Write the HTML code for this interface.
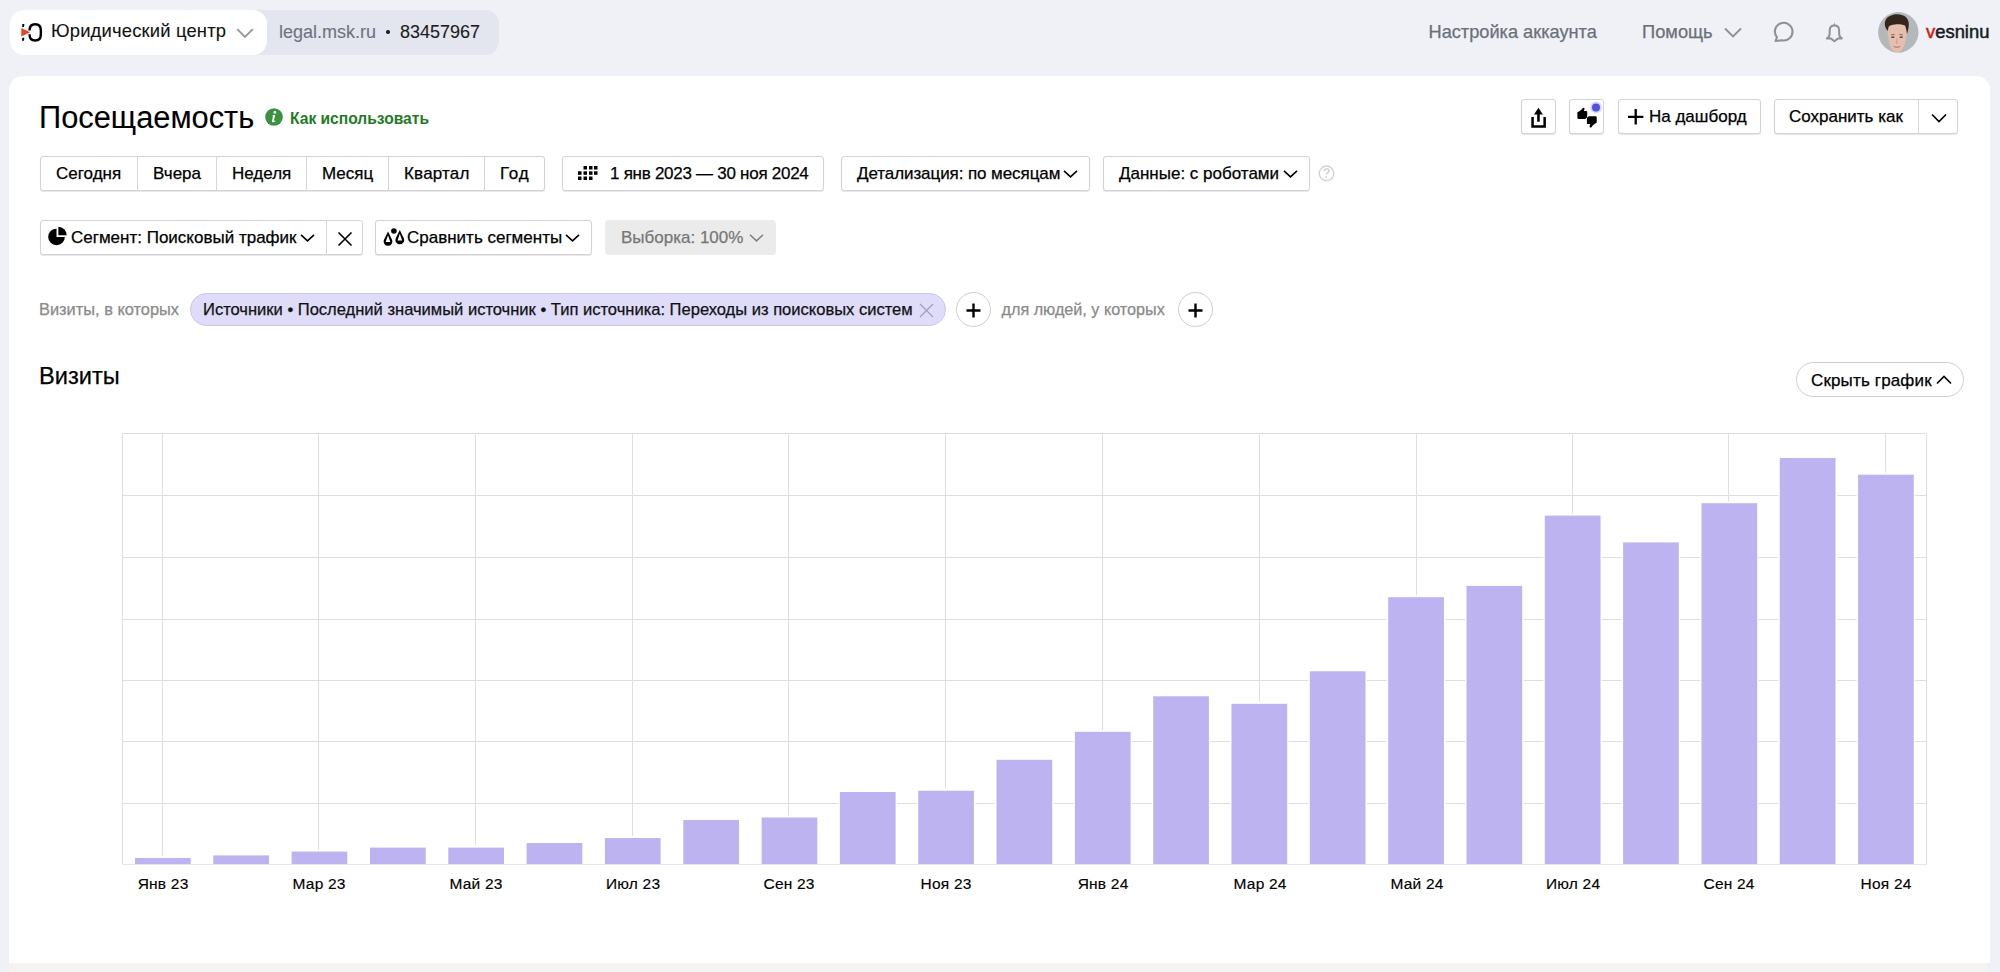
<!DOCTYPE html>
<html lang="ru">
<head>
<meta charset="utf-8">
<title>Посещаемость</title>
<style>
*{box-sizing:border-box;margin:0;padding:0}
html,body{width:2000px;height:972px;overflow:hidden}
body{position:relative;background:#eff1f6;font-family:"Liberation Sans",sans-serif;color:#000}
.a{position:absolute}
.t{position:absolute;white-space:nowrap;line-height:1;-webkit-text-stroke:0.25px currentColor}
.btn{position:absolute;background:#fff;border:1px solid #d3d3d3;border-radius:3px;box-shadow:0 1px 1px rgba(0,0,0,.10)}
.div{position:absolute;width:1px;background:#d6d6d6}
svg{position:absolute;overflow:visible}
</style>
</head>
<body>
<!-- ===== top header ===== -->
<div class="a" style="left:10px;top:10px;width:489px;height:45px;border-radius:14px;background:#e3e6ee"></div>
<div class="a" style="left:10px;top:10px;width:257px;height:45px;border-radius:14px;background:#fff"></div>
<svg style="left:20px;top:22px" width="24" height="21" viewBox="0 0 24 21">
  <path d="M2.3 2.0 L4.4 2.0 L4.0 5.0 L2.1 5.0 Z" fill="#000"/>
  <path d="M2.3 15.8 L4.3 15.8 L4.0 18.8 L2.1 18.8 Z" fill="#000"/>
  <path d="M1.3 5.9 L10.2 10.2 L1.3 14.5 Z" fill="#e0482a"/>
  <path d="M9.55 8.4 L9.55 8.2 C9.55 4.5 11.5 2.2 15.2 2.2 C18.9 2.2 20.85 4.5 20.85 8.2 L20.85 12.5 C20.85 16.2 18.9 18.5 15.2 18.5 C11.5 18.5 9.55 16.2 9.55 12.5 L9.55 12.2" fill="none" stroke="#000" stroke-width="2.4"/>
</svg>
<div class="t" style="left:51px;top:22px;font-size:18.4px;letter-spacing:0.18px;color:#111;-webkit-text-stroke:0.1px #111">Юридический центр</div>
<svg style="left:236px;top:28px" width="18" height="11" viewBox="0 0 18 11"><path d="M1.2 1.2 L9 9 L16.8 1.2" fill="none" stroke="#92959d" stroke-width="1.8"/></svg>
<div class="t" style="left:279px;top:23px;font-size:18px;color:#6e7280;-webkit-text-stroke:0.1px #6e7280">legal.msk.ru</div>
<div class="a" style="left:386.3px;top:30.3px;width:3.4px;height:3.4px;border-radius:50%;background:#222"></div>
<div class="t" style="left:400px;top:23px;font-size:18px;color:#1b1b1f;-webkit-text-stroke:0.1px #1b1b1f">83457967</div>

<div class="t" style="left:1428.5px;top:23px;font-size:18.2px;color:#6b6f79">Настройка аккаунта</div>
<div class="t" style="left:1642px;top:23px;font-size:18.3px;color:#6b6f79">Помощь</div>
<svg style="left:1724px;top:27px" width="18" height="11" viewBox="0 0 18 11"><path d="M1 1.5 L9 9.5 L17 1.5" fill="none" stroke="#8c909a" stroke-width="1.8"/></svg>
<svg style="left:1768px;top:17px" width="30" height="30" viewBox="0 0 30 30"><path d="M8.96 20.26 A8.8 8.8 0 1 1 13.87 23.21 L7.6 24.0 Z" fill="none" stroke="#8d9199" stroke-width="2.1" stroke-linejoin="round"/></svg>
<svg style="left:1820px;top:17px" width="30" height="30" viewBox="0 0 30 30"><path d="M6.9 21.4 C8.7 20.6 9.5 19.5 9.6 17 L9.7 13.2 C9.7 10.2 11.7 8.6 14.4 8.6 C17.1 8.6 19.1 10.2 19.1 13.2 L19.2 17 C19.3 19.5 20.1 20.6 21.9 21.4 L18.1 21.4 L14.4 24.3 L10.7 21.4 Z" fill="none" stroke="#8d9199" stroke-width="2" stroke-linejoin="round"/><path d="M13.3 8.9 L14.4 5.4 L15.5 8.9 Z" fill="#8d9199"/></svg>
<svg style="left:1878px;top:12px" width="41" height="41" viewBox="0 0 41 41"><defs><clipPath id="avc"><circle cx="20.3" cy="20.3" r="20.2"/></clipPath><filter id="avb" x="-10%" y="-10%" width="120%" height="120%"><feGaussianBlur stdDeviation="0.55"/></filter></defs>
<g clip-path="url(#avc)"><rect width="41" height="41" fill="#b4b8bb"/>
<g filter="url(#avb)">
<path d="M9.5 16 C9.5 11 13 8.5 19 8.5 C25 8.5 28.8 11 28.8 17 C28.8 24 27.5 31 25 36 C23.5 39 21.5 40 19 40 C16.5 40 14.5 39 13 36 C10.8 31 9.5 23 9.5 16 Z" fill="#e4bfae"/>
<path d="M13 36 C14 42 24 42 25 36 L26 42 L12 42 Z" fill="#d9ab98"/>
<path d="M6.8 12.5 C6.5 8 9.5 4 14 3.2 C16.5 2 21 2 24.5 3.2 C28.5 4.5 31 8 30.8 12.5 C30.7 16 30 19 29 22 C28.5 18.5 28 15.5 27 13.5 C24 12.5 20 12 17 12.5 C14 12.8 12 13.5 10.8 14.5 C10.2 16 10 17.5 10 19 C8 17 7 15 6.8 12.5 Z" fill="#34271f"/>
<ellipse cx="14.8" cy="25.2" rx="1.7" ry="0.9" fill="#6b4a3f"/><ellipse cx="23.2" cy="25.2" rx="1.7" ry="0.9" fill="#6b4a3f"/>
<path d="M13 22.8 L16.8 22.5 M21.2 22.5 L25 22.8" stroke="#8a6455" stroke-width="0.9"/>
<path d="M19 26.5 L18.3 31 L20 31.4" stroke="#c9998a" stroke-width="0.9" fill="none"/>
<path d="M15.8 34.6 C17.5 35.3 20.5 35.3 22.2 34.6" stroke="#a87565" stroke-width="1.1" fill="none"/>
</g></g></svg>
<div class="t" style="left:1926px;top:22.5px;font-size:18.4px;font-weight:400;color:#1a1a1f;-webkit-text-stroke:0.5px #1a1a1f"><span style="color:#d0160e;-webkit-text-stroke:0.5px #d0160e">v</span>esninu</div>

<!-- ===== main card ===== -->
<div class="a" style="left:9px;top:76px;width:1980.5px;height:886.5px;background:#fff;border-radius:14px 14px 0 0"></div>
<div class="a" style="left:9px;top:962.5px;width:1979px;height:10px;background:#f4f3f1"></div>

<!-- title -->
<div class="t" style="left:39px;top:103px;font-size:30.8px;color:#000;-webkit-text-stroke:0.1px #000">Посещаемость</div>
<svg style="left:265px;top:107.6px" width="18" height="18" viewBox="0 0 18 18"><circle cx="9" cy="9" r="8.8" fill="#3a9140"/><circle cx="9.9" cy="4.4" r="1.35" fill="#fff"/><path d="M7.6 7.3 L10.2 7.0 L8.9 12.6 C8.8 13.1 9.2 13.2 10.3 12.6 L10.5 13.3 C9.4 14.1 8.6 14.4 7.8 14.3 C7.0 14.2 6.9 13.6 7.0 13.0 L8.0 8.3 L7.4 8.2 Z" fill="#fff"/></svg>
<div class="t" style="left:290px;top:110.6px;font-size:15.6px;font-weight:700;color:#237a25;-webkit-text-stroke:0">Как использовать</div>

<!-- right action buttons -->
<div class="btn" style="left:1521px;top:99px;width:35px;height:35px"></div>
<svg style="left:1522px;top:100px" width="34" height="34" viewBox="0 0 34 34"><path d="M10.55 17.1 V26.5 H22.65 V17.1" fill="none" stroke="#000" stroke-width="2.5"/><path d="M16.45 13.5 V21.7" stroke="#000" stroke-width="2.6"/><path d="M16.45 7.8 L12.0 14.4 L20.9 14.4 Z" fill="#000"/></svg>
<div class="btn" style="left:1569px;top:99px;width:35px;height:35px"></div>
<svg style="left:1570px;top:100px" width="34" height="34" viewBox="0 0 34 34"><defs><path id="thu" d="M7.4 12.3 C9.5 11.6 11.5 9.7 12.5 8.2 C13.2 7.2 14.7 7.6 14.5 8.9 L13.9 11.1 L16.1 11.1 C16.7 11.1 17.2 11.6 17.2 12.2 L17.2 16.0 C17.2 17.6 16.1 18.9 14.6 18.9 L8.5 18.9 C7.9 18.9 7.4 18.4 7.4 17.8 Z" fill="#000"/></defs><use href="#thu"/><use href="#thu" transform="rotate(180 17.05 17.55)"/><circle cx="26" cy="7.4" r="5.9" fill="#d7d6fb"/><circle cx="26" cy="7.4" r="4" fill="#4e53dd"/></svg>
<div class="btn" style="left:1618px;top:99px;width:143px;height:35px"></div>
<svg style="left:1627.5px;top:108.8px" width="16" height="16" viewBox="0 0 16 16"><path d="M7.7 0 L7.7 15.6 M0 7.8 L15.4 7.8" stroke="#000" stroke-width="2.3"/></svg>
<div class="t" style="left:1649px;top:107.6px;font-size:17px">На дашборд</div>
<div class="btn" style="left:1774px;top:99px;width:184px;height:35px"></div>
<div class="div" style="left:1918px;top:100px;height:33px"></div>
<div class="t" style="left:1789px;top:107.6px;font-size:17px">Сохранить как</div>
<svg style="left:1931px;top:113px" width="16" height="10" viewBox="0 0 16 10"><path d="M1 1.5 L8 8.5 L15 1.5" fill="none" stroke="#000" stroke-width="1.6"/></svg>

<!-- period row -->
<div class="btn" style="left:40px;top:156px;width:505px;height:35px"></div>
<div class="div" style="left:137px;top:157px;height:33px"></div>
<div class="div" style="left:216px;top:157px;height:33px"></div>
<div class="div" style="left:306px;top:157px;height:33px"></div>
<div class="div" style="left:388px;top:157px;height:33px"></div>
<div class="div" style="left:484px;top:157px;height:33px"></div>
<div class="t" style="left:56px;top:165px;font-size:17px">Сегодня</div>
<div class="t" style="left:153px;top:165px;font-size:17px">Вчера</div>
<div class="t" style="left:232px;top:165px;font-size:17px">Неделя</div>
<div class="t" style="left:322px;top:165px;font-size:17px">Месяц</div>
<div class="t" style="left:404px;top:165px;font-size:17px;letter-spacing:0.2px">Квартал</div>
<div class="t" style="left:500px;top:165px;font-size:17px;letter-spacing:0.8px">Год</div>

<div class="btn" style="left:562px;top:156px;width:262px;height:35px"></div>
<svg style="left:578px;top:166px" width="20" height="14" viewBox="0 0 20 14">
 <g fill="#000">
 <rect x="5.5" y="0" width="3.5" height="3.5"/><rect x="11" y="0" width="3.5" height="3.5"/><rect x="16" y="0" width="3.5" height="3.5"/>
 <rect x="0" y="5.3" width="3.5" height="3.5"/><rect x="5.5" y="5.3" width="3.5" height="3.5"/><rect x="11" y="5.3" width="3.5" height="3.5"/><rect x="16" y="5.3" width="3.5" height="3.5"/>
 <rect x="0" y="10.5" width="3.5" height="3.5"/><rect x="5.5" y="10.5" width="3.5" height="3.5"/><rect x="11" y="10.5" width="3.5" height="3.5"/>
 </g></svg>
<div class="t" style="left:610px;top:165px;font-size:17px;letter-spacing:-0.27px">1 янв 2023 — 30 ноя 2024</div>

<div class="btn" style="left:841px;top:156px;width:249px;height:35px"></div>
<div class="t" style="left:857px;top:165px;font-size:17px;letter-spacing:-0.08px">Детализация: по месяцам</div>
<svg style="left:1063px;top:168.9px" width="15" height="10" viewBox="0 0 15 10"><path d="M1 1.8 L7.5 7.9 L14 1.8" fill="none" stroke="#000" stroke-width="1.6"/></svg>
<div class="btn" style="left:1103px;top:156px;width:207px;height:35px"></div>
<div class="t" style="left:1119px;top:165px;font-size:17px">Данные: с роботами</div>
<svg style="left:1282.5px;top:168.9px" width="15" height="10" viewBox="0 0 15 10"><path d="M1 1.8 L7.5 7.9 L14 1.8" fill="none" stroke="#000" stroke-width="1.6"/></svg>
<svg style="left:1317.5px;top:165.2px" width="17" height="17" viewBox="0 0 17 17"><circle cx="8.5" cy="8.3" r="7.3" fill="none" stroke="#d2d2d2" stroke-width="1.4"/><path d="M6.1 6.0 C6.3 4.6 7.3 3.9 8.6 3.9 C10.0 3.9 11.0 4.8 11.0 5.9 C11.0 7.4 9.0 7.6 8.5 9.6" fill="none" stroke="#d0d0d0" stroke-width="1.5"/><circle cx="8.4" cy="11.9" r="0.95" fill="#d0d0d0"/></svg>

<!-- segment row -->
<div class="btn" style="left:40px;top:220px;width:323px;height:35px"></div>
<div class="div" style="left:326px;top:221px;height:33px"></div>
<svg style="left:47.8px;top:226.4px" width="20.3" height="20.3" viewBox="0 0 20 20"><path d="M8.4 2.6 L8.4 10.8 L16.6 10.8 A8.2 8.2 0 1 1 8.4 2.6 Z" fill="#000"/><path d="M10.2 0.8 A8.4 8.4 0 0 1 18.4 9 L10.2 9 Z" fill="#000"/></svg>
<div class="t" style="left:71px;top:229px;font-size:17px">Сегмент: Поисковый трафик</div>
<svg style="left:300px;top:233px" width="15" height="10" viewBox="0 0 15 10"><path d="M1 1.8 L7.5 7.9 L14 1.8" fill="none" stroke="#000" stroke-width="1.6"/></svg>
<svg style="left:337px;top:231px" width="16" height="16" viewBox="0 0 16 16"><path d="M1.5 1.5 L14.5 14.5 M14.5 1.5 L1.5 14.5" stroke="#000" stroke-width="1.6"/></svg>

<div class="btn" style="left:375px;top:220px;width:217px;height:35px"></div>
<svg style="left:378px;top:222px" width="30" height="30" viewBox="0 0 30 30"><path fill-rule="evenodd" d="M10.0 9.6 L14.15 18.0 A4.4 4.4 0 1 1 5.85 18.0 Z M10.0 13.2 L7.7 20.0 L12.3 20.0 Z M21.8 8.1 L25.950000000000003 16.5 A4.4 4.4 0 1 1 17.65 16.5 Z M21.8 11.7 L19.5 18.5 L24.1 18.5 Z" fill="#000"/><circle cx="15.9" cy="9.0" r="2.8" fill="#000"/></svg>
<div class="t" style="left:407px;top:229px;font-size:17px">Сравнить сегменты</div>
<svg style="left:565px;top:233px" width="15" height="10" viewBox="0 0 15 10"><path d="M1 1.8 L7.5 7.9 L14 1.8" fill="none" stroke="#000" stroke-width="1.6"/></svg>

<div class="a" style="left:605px;top:220px;width:171px;height:35px;background:#ebebeb;border-radius:4px"></div>
<div class="t" style="left:621px;top:229px;font-size:17px;color:#777">Выборка: 100%</div>
<svg style="left:749px;top:233px" width="15" height="10" viewBox="0 0 15 10"><path d="M1 1.8 L7.5 7.9 L14 1.8" fill="none" stroke="#808080" stroke-width="1.5"/></svg>

<!-- filter row -->
<div class="t" style="left:39px;top:301px;font-size:16.4px;color:#8a8a8a">Визиты, в которых</div>
<div class="a" style="left:190px;top:292.5px;width:756px;height:33.5px;border-radius:17px;background:#dfdcf9;border:1px solid #c9c5ec"></div>
<div class="t" style="left:203px;top:301.5px;font-size:16.55px;color:#111">Источники • Последний значимый источник • Тип источника: Переходы из поисковых систем</div>
<svg style="left:919px;top:303px" width="15" height="15" viewBox="0 0 15 15"><path d="M1 1 L14 14 M14 1 L1 14" stroke="#a09eb5" stroke-width="1.2"/></svg>
<div class="a" style="left:956px;top:292px;width:35px;height:35px;border-radius:50%;border:1px solid #cdcdcd;background:#fff"></div>
<svg style="left:966px;top:302.7px" width="15" height="15" viewBox="0 0 15 15"><path d="M7.5 0.5 L7.5 14.5 M0.5 7.5 L14.5 7.5" stroke="#000" stroke-width="2.4"/></svg>
<div class="t" style="left:1001.5px;top:301px;font-size:16.2px;color:#8a8a8a">для людей, у которых</div>
<div class="a" style="left:1178px;top:292px;width:35px;height:35px;border-radius:50%;border:1px solid #cdcdcd;background:#fff"></div>
<svg style="left:1188px;top:302.7px" width="15" height="15" viewBox="0 0 15 15"><path d="M7.5 0.5 L7.5 14.5 M0.5 7.5 L14.5 7.5" stroke="#000" stroke-width="2.4"/></svg>

<!-- chart header -->
<div class="t" style="left:39px;top:365px;font-size:23.6px;color:#000">Визиты</div>
<div class="a" style="left:1796px;top:362px;width:168px;height:35px;border-radius:18px;border:1px solid #cfcfcf;background:#fff"></div>
<div class="t" style="left:1811px;top:372px;font-size:17px;letter-spacing:0.15px">Скрыть график</div>
<svg style="left:1936px;top:375px" width="16" height="10" viewBox="0 0 16 10"><path d="M1 8.5 L8 1.5 L15 8.5" fill="none" stroke="#000" stroke-width="1.6"/></svg>

<!-- chart -->
<svg style="left:0;top:0" width="2000" height="972" viewBox="0 0 2000 972" id="chart">
<line x1="122.5" y1="433.5" x2="1926.5" y2="433.5" stroke="#dedede" stroke-width="1"/>
<line x1="122.5" y1="495.5" x2="1926.5" y2="495.5" stroke="#dedede" stroke-width="1"/>
<line x1="122.5" y1="557.5" x2="1926.5" y2="557.5" stroke="#dedede" stroke-width="1"/>
<line x1="122.5" y1="619.5" x2="1926.5" y2="619.5" stroke="#dedede" stroke-width="1"/>
<line x1="122.5" y1="680.5" x2="1926.5" y2="680.5" stroke="#dedede" stroke-width="1"/>
<line x1="122.5" y1="741.5" x2="1926.5" y2="741.5" stroke="#dedede" stroke-width="1"/>
<line x1="122.5" y1="803.5" x2="1926.5" y2="803.5" stroke="#dedede" stroke-width="1"/>
<line x1="162.5" y1="433.5" x2="162.5" y2="864.5" stroke="#dedede" stroke-width="1"/>
<line x1="318.5" y1="433.5" x2="318.5" y2="864.5" stroke="#dedede" stroke-width="1"/>
<line x1="475.5" y1="433.5" x2="475.5" y2="864.5" stroke="#dedede" stroke-width="1"/>
<line x1="632.5" y1="433.5" x2="632.5" y2="864.5" stroke="#dedede" stroke-width="1"/>
<line x1="788.5" y1="433.5" x2="788.5" y2="864.5" stroke="#dedede" stroke-width="1"/>
<line x1="945.5" y1="433.5" x2="945.5" y2="864.5" stroke="#dedede" stroke-width="1"/>
<line x1="1102.5" y1="433.5" x2="1102.5" y2="864.5" stroke="#dedede" stroke-width="1"/>
<line x1="1259.5" y1="433.5" x2="1259.5" y2="864.5" stroke="#dedede" stroke-width="1"/>
<line x1="1416.5" y1="433.5" x2="1416.5" y2="864.5" stroke="#dedede" stroke-width="1"/>
<line x1="1572.5" y1="433.5" x2="1572.5" y2="864.5" stroke="#dedede" stroke-width="1"/>
<line x1="1728.5" y1="433.5" x2="1728.5" y2="864.5" stroke="#dedede" stroke-width="1"/>
<line x1="1885.5" y1="433.5" x2="1885.5" y2="864.5" stroke="#dedede" stroke-width="1"/>
<line x1="122.5" y1="433.5" x2="122.5" y2="864.5" stroke="#dedede" stroke-width="1"/>
<line x1="1926.5" y1="433.5" x2="1926.5" y2="864.5" stroke="#dedede" stroke-width="1"/>
<rect x="133.5" y="856" width="58.7" height="8.0" fill="#fff"/>
<rect x="135.0" y="858" width="55.7" height="6.5" fill="#bcb3f0"/>
<rect x="211.8" y="853.4" width="58.7" height="10.6" fill="#fff"/>
<rect x="213.3" y="855.4" width="55.7" height="9.1" fill="#bcb3f0"/>
<rect x="290.1" y="849.6" width="58.7" height="14.4" fill="#fff"/>
<rect x="291.6" y="851.6" width="55.7" height="12.9" fill="#bcb3f0"/>
<rect x="368.5" y="845.6" width="58.7" height="18.4" fill="#fff"/>
<rect x="370.0" y="847.6" width="55.7" height="16.9" fill="#bcb3f0"/>
<rect x="446.8" y="845.6" width="58.7" height="18.4" fill="#fff"/>
<rect x="448.3" y="847.6" width="55.7" height="16.9" fill="#bcb3f0"/>
<rect x="525.1" y="841" width="58.7" height="23.0" fill="#fff"/>
<rect x="526.6" y="843" width="55.7" height="21.5" fill="#bcb3f0"/>
<rect x="603.4" y="836" width="58.7" height="28.0" fill="#fff"/>
<rect x="604.9" y="838" width="55.7" height="26.5" fill="#bcb3f0"/>
<rect x="681.8" y="818" width="58.7" height="46.0" fill="#fff"/>
<rect x="683.3" y="820" width="55.7" height="44.5" fill="#bcb3f0"/>
<rect x="760.1" y="815.5" width="58.7" height="48.5" fill="#fff"/>
<rect x="761.6" y="817.5" width="55.7" height="47.0" fill="#bcb3f0"/>
<rect x="838.4" y="790" width="58.7" height="74.0" fill="#fff"/>
<rect x="839.9" y="792" width="55.7" height="72.5" fill="#bcb3f0"/>
<rect x="916.7" y="788.75" width="58.7" height="75.2" fill="#fff"/>
<rect x="918.2" y="790.75" width="55.7" height="73.8" fill="#bcb3f0"/>
<rect x="995.0" y="757.8" width="58.7" height="106.2" fill="#fff"/>
<rect x="996.5" y="759.8" width="55.7" height="104.7" fill="#bcb3f0"/>
<rect x="1073.4" y="729.8" width="58.7" height="134.2" fill="#fff"/>
<rect x="1074.9" y="731.8" width="55.7" height="132.7" fill="#bcb3f0"/>
<rect x="1151.7" y="694.3" width="58.7" height="169.7" fill="#fff"/>
<rect x="1153.2" y="696.3" width="55.7" height="168.2" fill="#bcb3f0"/>
<rect x="1230.0" y="701.8" width="58.7" height="162.2" fill="#fff"/>
<rect x="1231.5" y="703.8" width="55.7" height="160.7" fill="#bcb3f0"/>
<rect x="1308.3" y="669.3" width="58.7" height="194.7" fill="#fff"/>
<rect x="1309.8" y="671.3" width="55.7" height="193.2" fill="#bcb3f0"/>
<rect x="1386.7" y="595.2" width="58.7" height="268.8" fill="#fff"/>
<rect x="1388.2" y="597.2" width="55.7" height="267.3" fill="#bcb3f0"/>
<rect x="1465.0" y="583.9" width="58.7" height="280.1" fill="#fff"/>
<rect x="1466.5" y="585.9" width="55.7" height="278.6" fill="#bcb3f0"/>
<rect x="1543.3" y="513.6" width="58.7" height="350.4" fill="#fff"/>
<rect x="1544.8" y="515.6" width="55.7" height="348.9" fill="#bcb3f0"/>
<rect x="1621.6" y="540.4" width="58.7" height="323.6" fill="#fff"/>
<rect x="1623.1" y="542.4" width="55.7" height="322.1" fill="#bcb3f0"/>
<rect x="1700.0" y="501.2" width="58.7" height="362.8" fill="#fff"/>
<rect x="1701.5" y="503.2" width="55.7" height="361.3" fill="#bcb3f0"/>
<rect x="1778.3" y="456" width="58.7" height="408.0" fill="#fff"/>
<rect x="1779.8" y="458" width="55.7" height="406.5" fill="#bcb3f0"/>
<rect x="1856.6" y="472.7" width="58.7" height="391.3" fill="#fff"/>
<rect x="1858.1" y="474.7" width="55.7" height="389.8" fill="#bcb3f0"/>
<line x1="122" y1="864.5" x2="1927" y2="864.5" stroke="#e6e6e6" stroke-width="1.2"/>
<text x="163.1" y="888.6" text-anchor="middle" font-family="Liberation Sans" font-size="15.5" letter-spacing="0.22" fill="#000" stroke="#000" stroke-width="0.15">Янв 23</text>
<text x="319.1" y="888.6" text-anchor="middle" font-family="Liberation Sans" font-size="15.5" letter-spacing="0.22" fill="#000" stroke="#000" stroke-width="0.15">Мар 23</text>
<text x="476.1" y="888.6" text-anchor="middle" font-family="Liberation Sans" font-size="15.5" letter-spacing="0.22" fill="#000" stroke="#000" stroke-width="0.15">Май 23</text>
<text x="633.1" y="888.6" text-anchor="middle" font-family="Liberation Sans" font-size="15.5" letter-spacing="0.22" fill="#000" stroke="#000" stroke-width="0.15">Июл 23</text>
<text x="789.1" y="888.6" text-anchor="middle" font-family="Liberation Sans" font-size="15.5" letter-spacing="0.22" fill="#000" stroke="#000" stroke-width="0.15">Сен 23</text>
<text x="946.1" y="888.6" text-anchor="middle" font-family="Liberation Sans" font-size="15.5" letter-spacing="0.22" fill="#000" stroke="#000" stroke-width="0.15">Ноя 23</text>
<text x="1103.1" y="888.6" text-anchor="middle" font-family="Liberation Sans" font-size="15.5" letter-spacing="0.22" fill="#000" stroke="#000" stroke-width="0.15">Янв 24</text>
<text x="1260.1" y="888.6" text-anchor="middle" font-family="Liberation Sans" font-size="15.5" letter-spacing="0.22" fill="#000" stroke="#000" stroke-width="0.15">Мар 24</text>
<text x="1417.1" y="888.6" text-anchor="middle" font-family="Liberation Sans" font-size="15.5" letter-spacing="0.22" fill="#000" stroke="#000" stroke-width="0.15">Май 24</text>
<text x="1573.1" y="888.6" text-anchor="middle" font-family="Liberation Sans" font-size="15.5" letter-spacing="0.22" fill="#000" stroke="#000" stroke-width="0.15">Июл 24</text>
<text x="1729.1" y="888.6" text-anchor="middle" font-family="Liberation Sans" font-size="15.5" letter-spacing="0.22" fill="#000" stroke="#000" stroke-width="0.15">Сен 24</text>
<text x="1886.1" y="888.6" text-anchor="middle" font-family="Liberation Sans" font-size="15.5" letter-spacing="0.22" fill="#000" stroke="#000" stroke-width="0.15">Ноя 24</text>
</svg>

</body>
</html>
